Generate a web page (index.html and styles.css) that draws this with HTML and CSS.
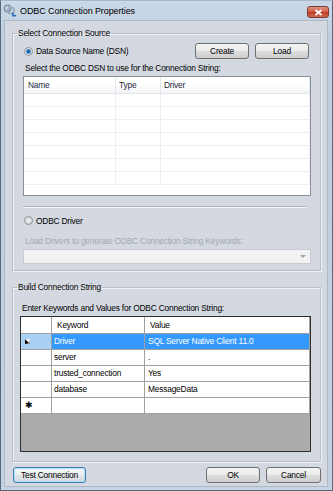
FILE: index.html
```html
<!DOCTYPE html>
<html lang="en">

<head>
  <meta charset="UTF-8">
  <title>ODBC Connection Properties</title>
  <link rel="stylesheet" href="styles.css">
</head>

<body>
  <div class="window">
    <div class="titlebar">
      <svg class="app-icon" width="14" height="13" viewBox="0 0 14 13">
        <circle cx="4.5" cy="4.5" r="3.2" fill="none" stroke="#7f93aa" stroke-width="1.6" />
        <circle cx="8" cy="6.5" r="3.2" fill="none" stroke="#9aaabb" stroke-width="1.6" />
        <path d="M9 8.5h1.6v2.3h2.4v1.6H9z" fill="#2d6fc0" />
      </svg>
      <span class="title">ODBC Connection Properties</span>
      <div class="close">
        <svg width="9" height="7" viewBox="0 0 9 7">
          <path d="M1.5 1l6 5M7.5 1l-6 5" stroke="#fff" stroke-width="1.8" />
        </svg>
      </div>
    </div>

    <div class="client">
      <fieldset class="group">
        <legend>Select Connection Source</legend>
        <div class="group-body source-body">
          <div class="dsn-row">
            <label class="radio"><span class="radio-dot checked"></span>Data Source Name (DSN)</label>
            <div class="dsn-buttons">
              <button class="btn">Create</button>
              <button class="btn">Load</button>
            </div>
          </div>
          <div class="hint">Select the ODBC DSN to use for the Connection String:</div>
          <div class="listview">
            <div class="lv-row lv-header"><span>Name</span><span>Type</span><span>Driver</span></div>
            <div class="lv-row"><span></span><span></span><span></span></div>
            <div class="lv-row"><span></span><span></span><span></span></div>
            <div class="lv-row"><span></span><span></span><span></span></div>
            <div class="lv-row"><span></span><span></span><span></span></div>
            <div class="lv-row"><span></span><span></span><span></span></div>
            <div class="lv-row"><span></span><span></span><span></span></div>
            <div class="lv-row"><span></span><span></span><span></span></div>
          </div>
          <div class="sep"></div>
          <label class="radio driver-radio"><span class="radio-dot"></span>ODBC Driver</label>
          <div class="hint disabled">Load Drivers to generate ODBC Connection String Keywords:</div>
          <div class="combo"><span class="combo-arrow"></span></div>
        </div>
      </fieldset>

      <fieldset class="group build">
        <legend>Build Connection String</legend>
        <div class="group-body build-body">
          <div class="hint">Enter Keywords and Values for ODBC Connection String:</div>
          <div class="grid">
            <div class="gr gr-head">
              <span class="rh"></span><span class="kw">Keyword</span><span class="val">Value</span>
            </div>
            <div class="gr selected">
              <span class="rh"><span class="row-arrow"></span></span><span class="kw">Driver</span><span class="val">SQL Server Native Client 11.0</span>
            </div>
            <div class="gr">
              <span class="rh"></span><span class="kw">server</span><span class="val">.</span>
            </div>
            <div class="gr">
              <span class="rh"></span><span class="kw">trusted_connection</span><span class="val">Yes</span>
            </div>
            <div class="gr">
              <span class="rh"></span><span class="kw">database</span><span class="val">MessageData</span>
            </div>
            <div class="gr">
              <span class="rh star">&#10033;</span><span class="kw"></span><span class="val"></span>
            </div>
          </div>
        </div>
      </fieldset>

      <div class="footer">
        <button class="btn default">Test Connection</button>
        <button class="btn ok">OK</button>
        <button class="btn cancel">Cancel</button>
      </div>
    </div>
  </div>
</body>

</html>
```

FILE: styles.css
```css
body {
  margin: 0;
  font-family: "Liberation Sans", Arial, sans-serif;
  font-size: 8.4px;
  letter-spacing: -0.2px;
  color: #000;
  background: #fff;
}

.window {
  width: 333px;
  height: 491px;
  box-sizing: border-box;
  display: flex;
  flex-direction: column;
  background: linear-gradient(#cad8e7, #bfcee0 40px, #c4d2e2);
  border: 1px solid #55697c;
  border-top-color: #a7b8ca;
}

.titlebar {
  height: 19px;
  display: flex;
  align-items: flex-start;
  padding: 0 3px 0 2px;
}

.app-icon {
  margin-top: 3px;
}

.title {
  margin: 4px 0 0 3px;
  font-size: 9px;
  line-height: 12px;
  letter-spacing: -0.1px;
}

.close {
  margin: 5px 0 0 auto;
  width: 22px;
  height: 12px;
  box-sizing: border-box;
  display: flex;
  align-items: center;
  justify-content: center;
  border: 1px solid #7a3a32;
  border-radius: 3px;
  background: linear-gradient(#e39282, #d2604b 45%, #c03a24 55%, #d46a55);
}

.client {
  flex: 1;
  margin: 0 4px 3px 3px;
  padding: 7px 6px 0 7px;
  background: #d4d9e1;
  border: 1px solid #aeb9c6;
}

.group {
  margin: 0;
  padding: 0;
  min-width: 0;
  border: 1px solid #b6bec9;
  box-shadow: inset 1px 1px 0 #f1f3f6, 1px 1px 0 #f1f3f6;
}

.group legend {
  margin-left: 4px;
  padding: 0 1px;
  line-height: 11px;
}

.source-body {
  padding: 4px 9px 6px 10px;
}

.build {
  margin-top: 11px;
}

.build-body {
  padding: 10px 9px 9px 7px;
}

.dsn-row {
  display: flex;
  align-items: center;
  justify-content: space-between;
  height: 16px;
}

.dsn-buttons {
  display: flex;
  gap: 6px;
  margin-right: 2px;
}

.dsn-buttons .btn {
  width: 54px;
}

.radio {
  display: flex;
  align-items: center;
  gap: 3px;
  margin-left: 1px;
  height: 13px;
}

.radio-dot {
  width: 9px;
  height: 9px;
  box-sizing: border-box;
  border-radius: 50%;
  border: 1px solid #8d9196;
  background: radial-gradient(circle, #eeeeee 0, #d9dbdd 60%, #f4f4f4);
}

.radio-dot.checked {
  background: radial-gradient(circle, #153e6b 0, #2a76b8 1.6px, #9cc9ec 2.6px, #e9eef2 3.2px);
}

.driver-radio {
  margin-top: 6px;
}

.hint {
  margin-top: 4px;
  line-height: 11px;
  padding-left: 2px;
}

.hint.disabled {
  margin-top: 9px;
  color: #a2a8b0;
}

.build-body .hint {
  margin-top: 0;
  padding-left: 2px;
}

.listview {
  margin-top: 2px;
  height: 120px;
  box-sizing: border-box;
  border: 1px solid #8a9098;
  background: #fff;
  overflow: hidden;
}

.lv-row {
  display: grid;
  grid-template-columns: 92px 45px 1fr;
  height: 13px;
  box-sizing: border-box;
  border-bottom: 1px solid #efefef;
}

.lv-row span {
  border-right: 1px solid #f0f0f0;
}

.lv-header {
  height: 17px;
  background: linear-gradient(#ffffff, #ffffff 50%, #f1f3f5);
  border-bottom-color: #e3e6ea;
  color: #1c2838;
  line-height: 16px;
}

.lv-header span {
  padding-left: 3px;
  border-right-color: #e2e5e9;
}

.lv-header span:first-child {
  padding-left: 4px;
}

.sep {
  margin: 10px 4px 0 0;
  border-top: 1px solid #a9b2bd;
  border-bottom: 1px solid #f4f6f8;
}

.combo {
  margin-top: 2px;
  height: 15px;
  box-sizing: border-box;
  border: 1px solid #c8ccd2;
  background: #f2f2f3;
  display: flex;
  justify-content: flex-end;
  align-items: center;
  padding-right: 4px;
}

.combo-arrow {
  width: 0;
  height: 0;
  border-left: 3px solid transparent;
  border-right: 3px solid transparent;
  border-top: 3px solid #a0a3a8;
}

.grid {
  margin-top: 2px;
  height: 136px;
  box-sizing: border-box;
  border: 1px solid #2e2e2e;
  background: #ababab;
}

.gr {
  display: flex;
  height: 16px;
  line-height: 15px;
}

.gr span {
  box-sizing: border-box;
  border-right: 1px solid #a0a0a0;
  border-bottom: 1px solid #a0a0a0;
  background: #fff;
  white-space: nowrap;
}

.gr .rh {
  width: 31px;
  display: flex;
  align-items: center;
  padding-left: 4px;
}

.gr .kw {
  width: 93px;
  padding-left: 2px;
}

.gr .val {
  flex: 1;
  padding-left: 3px;
}

.gr-head {
  height: 17px;
  line-height: 16px;
}

.gr-head .kw {
  padding-left: 5px;
}

.gr-head .val {
  padding-left: 5px;
}

.gr.selected .kw,
.gr.selected .val {
  background: #3399ff;
  color: #fff;
}

.gr.selected .rh {
  background: #a9d1f3;
}

.row-arrow {
  width: 0;
  height: 0;
  border-top: 4px solid transparent;
  border-bottom: 4px solid transparent;
  border-left: 4px solid #000;
}

.star {
  font-size: 9px;
  line-height: 9px;
  padding-left: 5px;
}

.footer {
  display: flex;
  margin-top: 5px;
}

.btn {
  height: 16px;
  padding: 0;
  font-family: inherit;
  font-size: 8.4px;
  letter-spacing: -0.2px;
  color: #000;
  border: 1px solid #707070;
  border-radius: 3px;
  background: linear-gradient(#f3f3f3, #ebebeb 50%, #dddddd 50%, #cfcfcf);
}

.btn.default {
  width: 73px;
  margin-left: 1px;
  border-color: #3c7fb1;
  box-shadow: inset 0 0 0 1px #b4dcf6;
  background: linear-gradient(#f5f8fa, #eceff2 50%, #dfe4e8 50%, #d5dbe0);
}

.btn.ok {
  width: 54px;
  margin-left: auto;
}

.btn.cancel {
  width: 55px;
  margin-left: 6px;
}
```
